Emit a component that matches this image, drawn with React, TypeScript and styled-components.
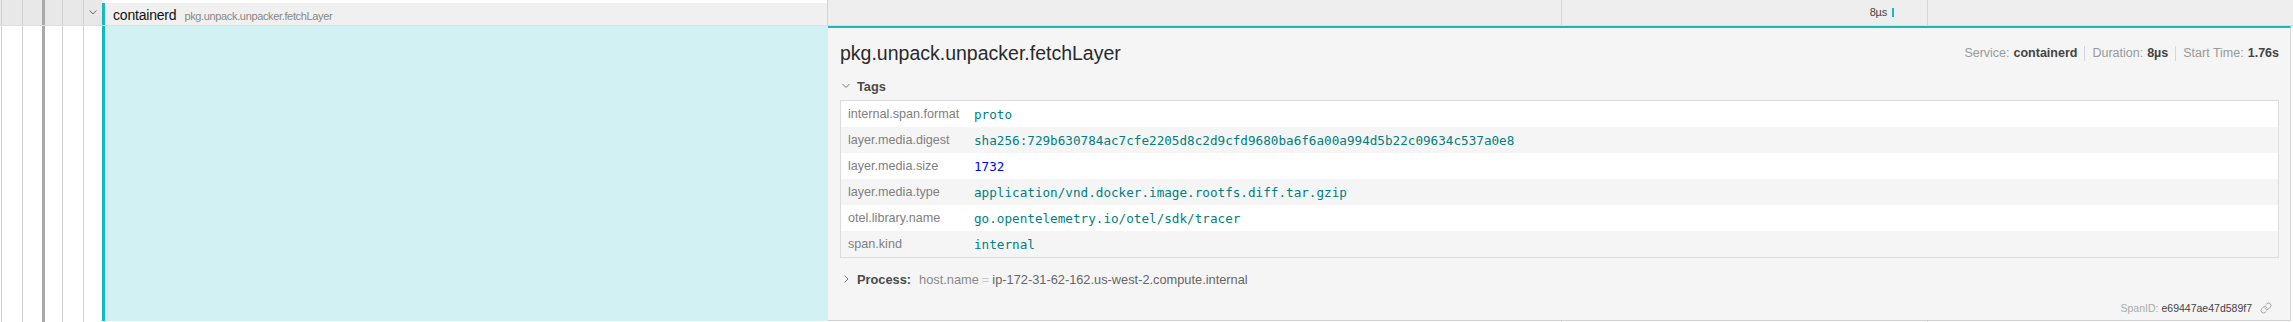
import React from 'react'
import styled, { createGlobalStyle } from 'styled-components'
import { Link } from 'lucide-react'

const SERVICE_COLOR = '#17b8be'

type TagValue = 'string' | 'number'

interface Tag {
  key: string
  value: string
  type: TagValue
}

const tags: Tag[] = [
  { key: 'internal.span.format', value: 'proto', type: 'string' },
  {
    key: 'layer.media.digest',
    value: 'sha256:729b630784ac7cfe2205d8c2d9cfd9680ba6f6a00a994d5b22c09634c537a0e8',
    type: 'string',
  },
  { key: 'layer.media.size', value: '1732', type: 'number' },
  { key: 'layer.media.type', value: 'application/vnd.docker.image.rootfs.diff.tar.gzip', type: 'string' },
  { key: 'otel.library.name', value: 'go.opentelemetry.io/otel/sdk/tracer', type: 'string' },
  { key: 'span.kind', value: 'internal', type: 'string' },
]

// tick lines of the timeline, as fraction of its width
const ticks = [0.5, 0.75]

const GlobalStyle = createGlobalStyle`
  html, body {
    margin: 0;
    padding: 0;
    background: #fff;
    overflow: hidden;
  }
  body {
    font-family: 'Liberation Sans', Helvetica, Arial, sans-serif;
    color: #333;
  }
  * {
    box-sizing: border-box;
  }
`

const Page = styled.div`
  width: 2293px;
`

const Row = styled.div<{ $height: number; $divider?: boolean }>`
  display: flex;
  height: ${(p) => p.$height}px;
  ${(p) => (p.$divider ? 'border-bottom: 1px solid #dedede;' : '')}
`

const NameColumn = styled.div<{ $divider?: boolean }>`
  display: flex;
  flex: none;
  width: 828px;
  height: 100%;
  ${(p) => (p.$divider ? 'border-right: 1px solid #d4d4d4;' : '')}
`

const Guides = styled.div<{ $bg: string }>`
  display: flex;
  height: 100%;
  padding-left: 1px;
  background: ${(p) => p.$bg};
`

const Guide = styled.div<{ $active?: boolean }>`
  width: 21px;
  height: 100%;
  border-left: ${(p) => (p.$active ? '3px solid #aaa' : '1px solid #d0d0d0')};
  margin-left: ${(p) => (p.$active ? '-1px' : '0')};
  margin-right: ${(p) => (p.$active ? '-1px' : '0')};
`

const ToggleCell = styled.div<{ $bg: string }>`
  display: flex;
  align-items: center;
  justify-content: center;
  width: 19px;
  height: 100%;
  border-left: 1px solid #d0d0d0;
  background: ${(p) => p.$bg};
`

const NameLabel = styled.div`
  display: flex;
  align-items: baseline;
  flex: 1;
  align-self: flex-end;
  height: 22px;
  padding: 4px 0 0 8px;
  border-left: 3px solid ${SERVICE_COLOR};
  background: #f0f0f0;
  white-space: nowrap;
`

const ServiceName = styled.span`
  font-size: 14px;
  letter-spacing: -0.2px;
  color: #111;
`

const OperationName = styled.span`
  margin-left: 8px;
  font-size: 11px;
  letter-spacing: -0.35px;
  color: #888;
`

const AccentFill = styled.div`
  flex: 1;
  height: 100%;
  border-left: 3px solid ${SERVICE_COLOR};
  background: #d1f1f2;
`

const Timeline = styled.div<{ $bg: string }>`
  position: relative;
  flex: 1;
  height: 100%;
  background: ${(p) => p.$bg};
`

const Tick = styled.div`
  position: absolute;
  top: 0;
  bottom: 0;
  width: 1px;
  background: #d6d6d6;
`

const SpanBar = styled.div`
  position: absolute;
  top: 8px;
  width: 2px;
  height: 9px;
  background: ${SERVICE_COLOR};
`

const SpanBarLabel = styled.span`
  position: absolute;
  top: 6px;
  transform: translateX(-100%);
  margin-left: -5px;
  font-size: 11px;
  letter-spacing: -0.2px;
  color: #444;
`

const DetailCell = styled.div`
  flex: 1;
  height: 100%;
  padding-right: 2px;
  background: #fff;
`

const Panel = styled.div`
  display: flex;
  flex-direction: column;
  height: 100%;
  padding: 13px 11px 0 12px;
  border-top: 2px solid ${SERVICE_COLOR};
  border-right: 1px solid #d8d8d8;
  border-bottom: 1px solid #d0d0d0;
  background: #f5f5f5;
`

const TitleRow = styled.div`
  display: flex;
  align-items: center;
  justify-content: space-between;
  height: 24px;
`

const Title = styled.h2`
  margin: 0;
  font-size: 19.5px;
  font-weight: normal;
  color: #2a2a2a;
`

const Meta = styled.div`
  display: flex;
  align-items: center;
  font-size: 12.5px;
  color: #999;
  white-space: nowrap;
`

const MetaValue = styled.strong`
  margin-left: 4px;
  color: #444;
`

const MetaDivider = styled.span`
  display: inline-block;
  width: 1px;
  height: 15px;
  margin: 0 7px;
  background: #d6d6d6;
`

const SectionToggle = styled.div<{ $gap: number }>`
  display: flex;
  align-items: center;
  height: 16px;
  margin-top: ${(p) => p.$gap}px;
  padding-left: 1px;
  font-size: 12.8px;
  white-space: nowrap;
`

const ToggleIcon = styled.svg`
  width: 10px;
  height: 10px;
  margin-right: 6px;
  flex: none;
`

const SectionLabel = styled.strong`
  color: #4a4a4a;
`

const TagTable = styled.div`
  margin-top: 6px;
  border: 1px solid #dcdcdc;
  background: #fff;
`

const TagRow = styled.div<{ $striped: boolean }>`
  display: grid;
  grid-template-columns: 133px 1fr;
  align-items: center;
  height: 26px;
  background: ${(p) => (p.$striped ? '#f5f5f5' : '#fff')};
`

const TagKey = styled.div`
  padding-left: 7px;
  font-size: 12.6px;
  color: #808080;
  white-space: nowrap;
`

const TagValueText = styled.div<{ $kind: TagValue }>`
  font-family: 'DejaVu Sans Mono', Menlo, monospace;
  font-size: 12.65px;
  color: ${(p) => (p.$kind === 'number' ? '#0000ff' : '#008080')};
  white-space: nowrap;
`

const ProcessKey = styled.span`
  margin-left: 8px;
  color: #888;
`

const ProcessEquals = styled.span`
  margin: 0 3px;
  color: #c8c8c8;
`

const ProcessValue = styled.span`
  color: #666;
`

const Footer = styled.div`
  display: flex;
  align-items: center;
  justify-content: flex-end;
  height: 14px;
  margin-top: 14px;
  padding-right: 7px;
  font-size: 10.5px;
  color: #aaa;
`

const SpanIdValue = styled.span`
  margin-left: 3px;
  color: #444;
`

const CopyLink = styled.span`
  display: inline-flex;
  margin-left: 8px;
  color: #888;
`

const ChevronDown = ({ size = 8 }: { size?: number }) => (
  <svg width={size} height={size * 0.6} viewBox="0 0 8 5" fill="none">
    <polyline points="0.5,0.5 4,4.2 7.5,0.5" stroke="#666" strokeWidth="1" />
  </svg>
)

const GuideCells = ({ bg }: { bg: string }) => (
  <Guides $bg={bg}>
    <Guide />
    <Guide />
    <Guide $active />
    <Guide />
  </Guides>
)

const App: React.FC = () => {
  const barLeft = 0.7263
  return (
    <Page>
      <GlobalStyle />
      <Row $height={26} $divider>
        <NameColumn $divider>
          <GuideCells bg="#e8e8e8" />
          <ToggleCell $bg="#e8e8e8">
            <ChevronDown />
          </ToggleCell>
          <NameLabel>
            <ServiceName>containerd</ServiceName>
            <OperationName>pkg.unpack.unpacker.fetchLayer</OperationName>
          </NameLabel>
        </NameColumn>
        <Timeline $bg="#eeeeee">
          {ticks.map((t) => (
            <Tick key={t} style={{ left: `${t * 100}%` }} />
          ))}
          <SpanBarLabel style={{ left: `${barLeft * 100}%` }}>8µs</SpanBarLabel>
          <SpanBar style={{ left: `${barLeft * 100}%` }} />
        </Timeline>
      </Row>

      <Row $height={295}>
        <NameColumn>
          <GuideCells bg="#fff" />
          <ToggleCell $bg="#fff" />
          <AccentFill />
        </NameColumn>
        <DetailCell>
          <Panel>
            <TitleRow>
              <Title>pkg.unpack.unpacker.fetchLayer</Title>
              <Meta>
                Service:<MetaValue>containerd</MetaValue>
                <MetaDivider />
                Duration:<MetaValue>8µs</MetaValue>
                <MetaDivider />
                Start Time:<MetaValue>1.76s</MetaValue>
              </Meta>
            </TitleRow>

            <SectionToggle $gap={13}>
              <ToggleIcon viewBox="0 0 10 10" fill="none">
                <polyline points="1.5,3 5,6.5 8.5,3" stroke="#777" strokeWidth="1" />
              </ToggleIcon>
              <SectionLabel>Tags</SectionLabel>
            </SectionToggle>

            <TagTable>
              {tags.map((tag, i) => (
                <TagRow key={tag.key} $striped={i % 2 === 1}>
                  <TagKey>{tag.key}</TagKey>
                  <TagValueText $kind={tag.type}>{tag.value}</TagValueText>
                </TagRow>
              ))}
            </TagTable>

            <SectionToggle $gap={13}>
              <ToggleIcon viewBox="0 0 10 10" fill="none">
                <polyline points="3.5,1.5 7,5 3.5,8.5" stroke="#777" strokeWidth="1" />
              </ToggleIcon>
              <SectionLabel>Process:</SectionLabel>
              <ProcessKey>host.name</ProcessKey>
              <ProcessEquals>=</ProcessEquals>
              <ProcessValue>ip-172-31-62-162.us-west-2.compute.internal</ProcessValue>
            </SectionToggle>

            <Footer>
              SpanID:<SpanIdValue>e69447ae47d589f7</SpanIdValue>
              <CopyLink>
                <Link size={12} strokeWidth={1.5} />
              </CopyLink>
            </Footer>
          </Panel>
        </DetailCell>
      </Row>

      <Row $height={10}>
        <NameColumn>
          <GuideCells bg="#fff" />
          <ToggleCell $bg="#fff" />
        </NameColumn>
        <Timeline $bg="#fff">
          {ticks.map((t) => (
            <Tick key={t} style={{ left: `${t * 100}%` }} />
          ))}
        </Timeline>
      </Row>
    </Page>
  )
}

export default App
